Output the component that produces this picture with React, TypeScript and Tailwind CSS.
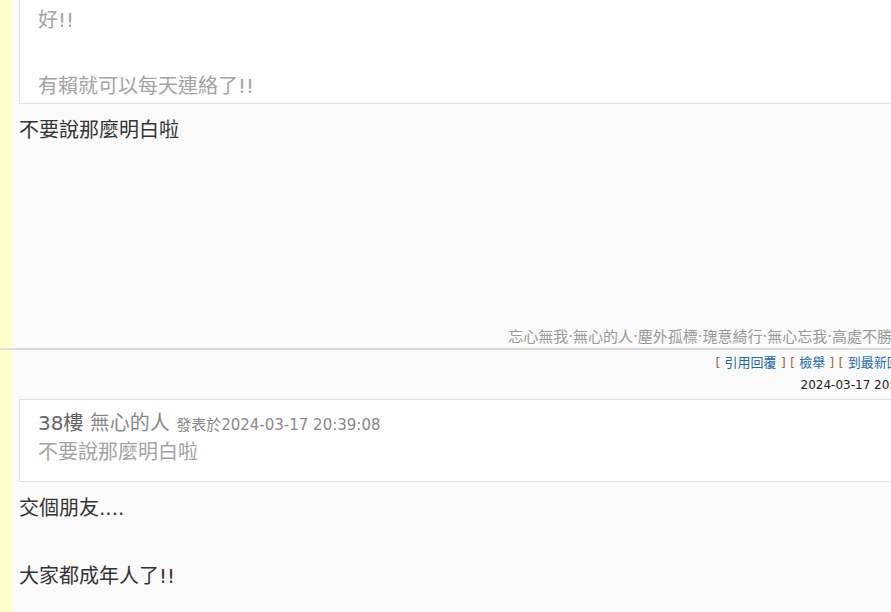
import React from "react";

export default function App() {
  return (
    <div className="h-screen w-full overflow-hidden bg-[#fafafa] flex flex-col font-['DejaVu_Sans','Noto_Sans_CJK_TC',sans-serif]">
      {/* Row 1 */}
      <div className="flex shrink-0 border-b-2 border-[#dcdcdc]">
        <div className="w-[12px] shrink-0 bg-[#ffffcc]" />
        <div className="w-[920px] shrink-0 pl-[7px]">
          <div className="border-x border-b border-[#e0e0e0] bg-white pl-[18px] pt-[4px] text-[20px] leading-[33px] text-[#a3a3a3]">
            <div>好!!</div>
            <div>&nbsp;</div>
            <div>有賴就可以每天連絡了!!</div>
          </div>
          <div className="mt-[9px] h-[214px] text-[20px] leading-[34px] text-[#333]">
            不要說那麼明白啦
          </div>
          <div className="pr-[25px] text-right text-[15px] leading-[21px] text-[#999] whitespace-nowrap">
            忘心無我·無心的人·塵外孤標·瑰意綺行·無心忘我·高處不勝寒
          </div>
        </div>
      </div>

      {/* Row 2 */}
      <div className="flex flex-1">
        <div className="w-[12px] shrink-0 bg-[#ffffcc]" />
        <div className="w-[920px] shrink-0 pl-[7px]">
          <div className="pt-[3px] pr-[10px] text-right text-[13px] leading-[20px] whitespace-nowrap text-[#9a6a4a]">
            [ <span className="text-[#1f6aa5]">引用回覆</span> ] [{" "}
            <span className="text-[#1f6aa5]">檢舉</span> ] [{" "}
            <span className="text-[#1f6aa5]">到最新回覆</span> ]
          </div>
          <div className="mt-[2px] pr-[4px] text-right text-[12px] leading-[20px] text-[#222] whitespace-nowrap">
            2024-03-17 20:39:08
          </div>
          <div className="mt-[4px] border border-[#e0e0e0] bg-white pl-[18px] pt-[10px] pb-[12px]">
            <div className="h-[26px] leading-[26px] whitespace-nowrap text-[#888]">
              <span className="text-[20px] leading-[26px] text-[#666]">38樓</span>
              <span className="text-[20px] leading-[26px]"> 無心的人 </span>
              <span className="text-[15px] leading-[26px]">發表於2024-03-17 20:39:08</span>
            </div>
            <div className="text-[20px] leading-[33px] text-[#a3a3a3]">不要說那麼明白啦</div>
          </div>
          <div className="mt-[9px] text-[20px] leading-[34px] text-[#333]">
            <div>交個朋友....</div>
            <div>&nbsp;</div>
            <div>大家都成年人了!!</div>
          </div>
        </div>
      </div>
    </div>
  );
}
